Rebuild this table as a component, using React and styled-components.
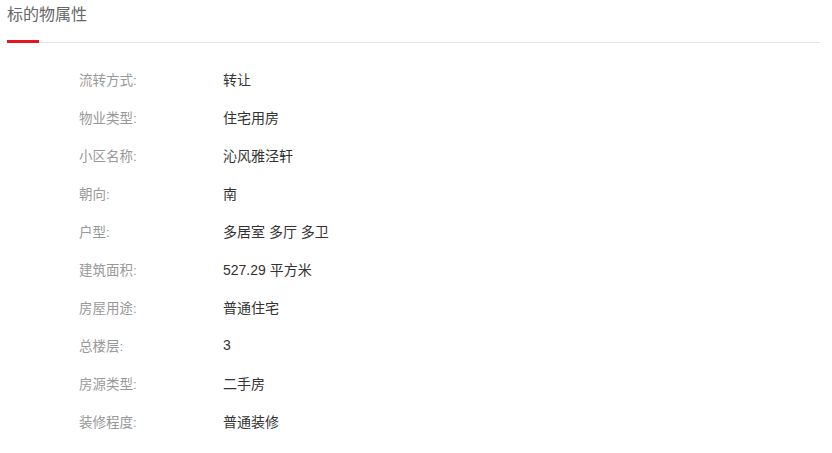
import React from 'react';
import styled, { createGlobalStyle } from 'styled-components';

const GlobalStyle = createGlobalStyle`
    body {
        margin: 0;
        background: #fff;
        font-family: "Liberation Sans", "Noto Sans CJK SC", sans-serif;
    }
`

const Panel = styled.div`
    width: 813px;
    padding-left: 7px;
`

const Header = styled.div`
    height: 42px;
    border-bottom: 1px solid #e4e4e4;
    position: relative;
`

const TitleText = styled.div`
    font-size: 16px;
    color: #666;
    line-height: 30px;
    height: 40px;
`

const RedBar = styled.div`
    position: absolute;
    left: 0;
    bottom: -1px;
    width: 32px;
    height: 3px;
    background: #e4151c;
`

const List = styled.div`
    padding: 17px 0 0 72px;
`

const Row = styled.div`
    display: flex;
    height: 38px;
    align-items: center;
    font-size: 13.5px;
`

const Label = styled.div`
    width: 144px;
    color: #999;
`

const Value = styled.div`
    color: #333;
    font-size: 14px;
`

const items = [
    ['流转方式:', '转让'],
    ['物业类型:', '住宅用房'],
    ['小区名称:', '沁风雅泾轩'],
    ['朝向:', '南'],
    ['户型:', '多居室 多厅 多卫'],
    ['建筑面积:', '527.29 平方米'],
    ['房屋用途:', '普通住宅'],
    ['总楼层:', '3'],
    ['房源类型:', '二手房'],
    ['装修程度:', '普通装修'],
]

export default function App() {
    return (
        <Panel>
            <GlobalStyle/>
            <Header>
                <TitleText>标的物属性</TitleText>
                <RedBar/>
            </Header>
            <List>
                {items.map(([label, value]) => (
                    <Row key={label}>
                        <Label>{label}</Label>
                        <Value>{value}</Value>
                    </Row>
                ))}
            </List>
        </Panel>
    )
}
